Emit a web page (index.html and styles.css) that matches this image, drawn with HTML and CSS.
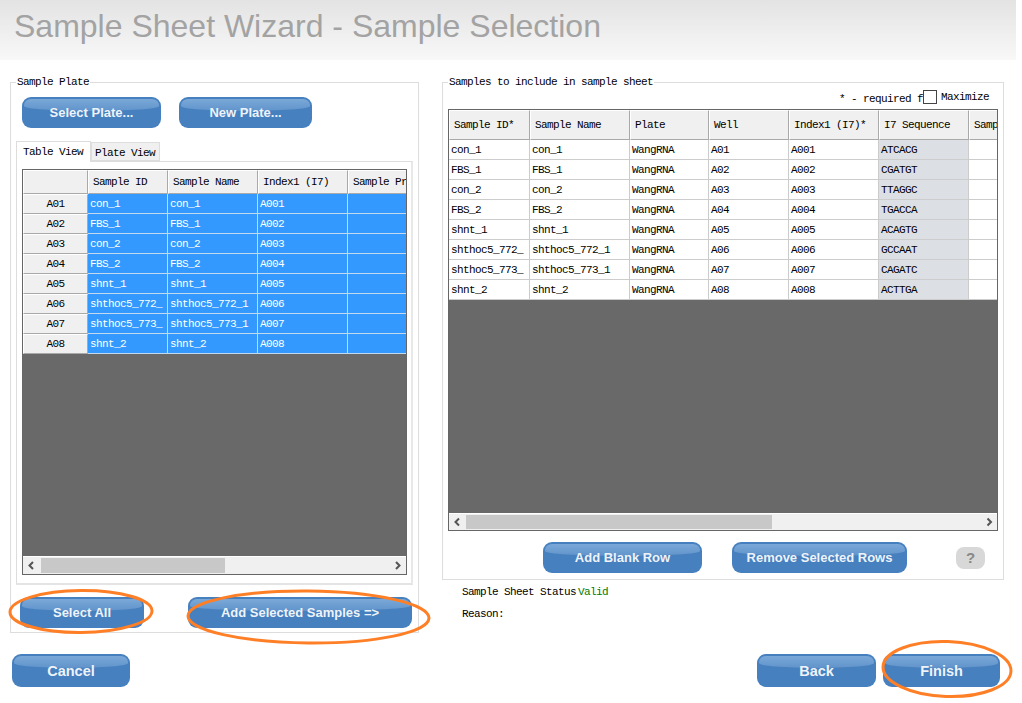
FILE: index.html
```html
<!DOCTYPE html>
<html lang="en">
<head>
<meta charset="utf-8">
<title>Sample Sheet Wizard - Sample Selection</title>
<link rel="stylesheet" href="styles.css">
</head>
<body>
<div class="page">
  <div class="title-bar"><h1>Sample Sheet Wizard - Sample Selection</h1></div>

  <div class="main">
    <fieldset class="panel plate-panel">
      <legend>Sample Plate</legend>
      <div class="plate-actions">
        <div class="btn btn-select-plate">Select Plate...</div>
        <div class="btn btn-new-plate">New Plate...</div>
      </div>
      <div class="tabs">
        <div class="tab tab-active">Table View</div>
        <div class="tab">Plate View</div>
      </div>
      <div class="tab-pane">
        <div class="grid-frame plate-frame">
          <table class="grid grid-selected">
            <colgroup><col class="c64"><col class="c80"><col class="c90"><col class="c90"><col class="c60"></colgroup>
            <tr><th></th><th>Sample ID</th><th>Sample Name</th><th>Index1 (I7)</th><th>Sample Pr</th></tr>
            <tr><th class="row-head">A01</th><td>con_1</td><td>con_1</td><td>A001</td><td></td></tr>
            <tr><th class="row-head">A02</th><td>FBS_1</td><td>FBS_1</td><td>A002</td><td></td></tr>
            <tr><th class="row-head">A03</th><td>con_2</td><td>con_2</td><td>A003</td><td></td></tr>
            <tr><th class="row-head">A04</th><td>FBS_2</td><td>FBS_2</td><td>A004</td><td></td></tr>
            <tr><th class="row-head">A05</th><td>shnt_1</td><td>shnt_1</td><td>A005</td><td></td></tr>
            <tr><th class="row-head">A06</th><td>shthoc5_772_</td><td>shthoc5_772_1</td><td>A006</td><td></td></tr>
            <tr><th class="row-head">A07</th><td>shthoc5_773_</td><td>shthoc5_773_1</td><td>A007</td><td></td></tr>
            <tr><th class="row-head">A08</th><td>shnt_2</td><td>shnt_2</td><td>A008</td><td></td></tr>
          </table>
          <div class="grid-empty"></div>
          <div class="scrollbar">
            <svg class="arrow" width="18" height="17" viewBox="0 0 18 17"><path d="M10 5 L6.5 8.5 L10 12" fill="none" stroke="#555" stroke-width="2"/></svg>
            <div class="track"><div class="thumb thumb-plate"></div></div>
            <svg class="arrow" width="18" height="17" viewBox="0 0 18 17"><path d="M8 5 L11.5 8.5 L8 12" fill="none" stroke="#555" stroke-width="2"/></svg>
          </div>
        </div>
      </div>
      <div class="plate-footer">
        <div class="btn btn-select-all">Select All</div>
        <div class="btn btn-add-selected">Add Selected Samples =&gt;</div>
      </div>
    </fieldset>

    <div class="right-col">
      <fieldset class="panel sheet-panel">
        <legend>Samples to include in sample sheet</legend>
        <div class="sheet-options">
          <span class="required-note">* - required f</span>
          <input type="checkbox" class="maximize-box">
          <span class="maximize-label">Maximize</span>
        </div>
        <div class="grid-frame sheet-frame">
          <table class="grid grid-sheet">
            <colgroup><col class="c81"><col class="c100"><col class="c79"><col class="c80"><col class="c90"><col class="c90"><col class="c29"></colgroup>
            <tr><th>Sample ID*</th><th>Sample Name</th><th>Plate</th><th>Well</th><th>Index1 (I7)*</th><th>I7 Sequence</th><th>Samp</th></tr>
            <tr><td>con_1</td><td>con_1</td><td>WangRNA</td><td>A01</td><td>A001</td><td class="seq">ATCACG</td><td></td></tr>
            <tr><td>FBS_1</td><td>FBS_1</td><td>WangRNA</td><td>A02</td><td>A002</td><td class="seq">CGATGT</td><td></td></tr>
            <tr><td>con_2</td><td>con_2</td><td>WangRNA</td><td>A03</td><td>A003</td><td class="seq">TTAGGC</td><td></td></tr>
            <tr><td>FBS_2</td><td>FBS_2</td><td>WangRNA</td><td>A04</td><td>A004</td><td class="seq">TGACCA</td><td></td></tr>
            <tr><td>shnt_1</td><td>shnt_1</td><td>WangRNA</td><td>A05</td><td>A005</td><td class="seq">ACAGTG</td><td></td></tr>
            <tr><td>shthoc5_772_</td><td>shthoc5_772_1</td><td>WangRNA</td><td>A06</td><td>A006</td><td class="seq">GCCAAT</td><td></td></tr>
            <tr><td>shthoc5_773_</td><td>shthoc5_773_1</td><td>WangRNA</td><td>A07</td><td>A007</td><td class="seq">CAGATC</td><td></td></tr>
            <tr><td>shnt_2</td><td>shnt_2</td><td>WangRNA</td><td>A08</td><td>A008</td><td class="seq">ACTTGA</td><td></td></tr>
          </table>
          <div class="grid-empty"></div>
          <div class="scrollbar">
            <svg class="arrow" width="17" height="16" viewBox="0 0 17 16"><path d="M10 4.5 L6.5 8 L10 11.5" fill="none" stroke="#555" stroke-width="2"/></svg>
            <div class="track"><div class="thumb thumb-sheet"></div></div>
            <svg class="arrow" width="17" height="16" viewBox="0 0 17 16"><path d="M7.5 4.5 L11 8 L7.5 11.5" fill="none" stroke="#555" stroke-width="2"/></svg>
          </div>
        </div>
        <div class="sheet-actions">
          <div class="btn btn-add-blank">Add Blank Row</div>
          <div class="btn btn-remove">Remove Selected Rows</div>
          <div class="help-btn">?</div>
        </div>
      </fieldset>
      <div class="status">
        <div class="status-row">Sample Sheet Status<span class="status-valid">Valid</span></div>
        <div class="status-row">Reason:</div>
      </div>
    </div>
  </div>

  <div class="footer">
    <div class="btn btn-cancel">Cancel</div>
    <div class="footer-right">
      <div class="btn btn-back">Back</div>
      <div class="btn btn-finish">Finish</div>
    </div>
  </div>

  <!-- orange marks drawn over the screenshot -->
  <svg class="marks" width="1022" height="703" viewBox="0 0 1022 703">
    <ellipse cx="81" cy="611.5" rx="71" ry="21" transform="rotate(-0.5 81 611)"/>
    <ellipse cx="308.5" cy="617" rx="120.5" ry="26" transform="rotate(0.5 308 617)"/>
    <ellipse cx="947" cy="669" rx="64" ry="27.5" transform="rotate(2 947 669)"/>
  </svg>
</div>
</body>
</html>
```

FILE: styles.css
```css
body {
  margin: 0;
  background: #fff;
  font-family: "Liberation Mono", monospace;
  font-size: 11px;
  letter-spacing: -0.6px;
  color: #000;
}
.page {
  position: relative;
  width: 1016px;
  height: 703px;
  overflow: hidden;
}

/* title */
.title-bar {
  height: 60px;
  background: linear-gradient(#e3e3e3, #f8f8f8);
  padding-left: 14px;
}
.title-bar h1 {
  margin: 0;
  font: normal 32px/53px "Liberation Sans", Arial, sans-serif;
  letter-spacing: 0;
  color: #a3a3a3;
}

/* layout */
.main {
  display: flex;
  align-items: flex-start;
  padding: 16px 0 0 10px;
}
.panel {
  margin: 0;
  padding: 0;
  border: 1px solid #ddd;
  box-sizing: border-box;
  min-width: 0;
}
.panel legend {
  margin-left: 5px;
  padding: 0 1px;
  line-height: 12px;
}
.plate-panel {
  width: 409px;
  height: 557px;
}
.right-col {
  width: 562px;
  margin-left: 23px;
}
.sheet-panel {
  height: 504px;
}

/* buttons */
.btn {
  position: relative;
  z-index: 0;
  box-sizing: border-box;
  height: 31px;
  border-radius: 9px;
  background: #4680bf;
  color: #eef3f9;
  font: bold 13px/32px "Liberation Sans", Arial, sans-serif;
  letter-spacing: 0;
  text-align: center;
  overflow: hidden;
}
.btn::before {
  content: "";
  position: absolute;
  z-index: -1;
  left: 2px;
  right: 2px;
  top: 2px;
  height: 12px;
  border-radius: 7px 7px 50% 50% / 6px 6px 5px 5px;
  background: linear-gradient(#7aa8d8, #6194cb);
}

.plate-actions {
  display: flex;
  margin: 9px 0 0 11px;
}
.btn-select-plate { width: 139px; }
.btn-new-plate { width: 133px; margin-left: 18px; }

/* tabs */
.tabs {
  display: flex;
  align-items: flex-end;
  margin: 13px 0 0 5px;
  height: 21px;
}
.tab {
  box-sizing: border-box;
  width: 69px;
  height: 19px;
  line-height: 20px;
  padding-left: 3px;
  border: 1px solid #ddd;
  background: #f0f0f0;
  margin-bottom: 1px;
}
.tab-active {
  width: 75px;
  height: 21px;
  line-height: 20px;
  padding-left: 6px;
  background: #fff;
  border-bottom: 0;
  margin-bottom: 0;
  position: relative;
  z-index: 1;
}
.tab-pane {
  box-sizing: border-box;
  width: 397px;
  height: 424px;
  margin: -1px 0 0 5px;
  padding: 7px 0 0 5px;
  border: 1px solid #ddd;
  border-right: 2px solid #e8e8e8;
  border-bottom: 2px solid #e4e4e4;
}

/* tables */
.grid-frame {
  box-sizing: border-box;
  display: flex;
  flex-direction: column;
  border: 1px solid #666;
  overflow: hidden;
}
.plate-frame {
  width: 385px;
  height: 406px;
}
.sheet-frame {
  width: 550px;
  height: 422px;
  margin-left: 5px;
}
.grid {
  flex: none;
  table-layout: fixed;
  border-collapse: separate;
  border-spacing: 0;
  width: 100%;
  background: #fff;
}
.c29 { width: 29px; }
.c60 { width: 59px; }
.c64 { width: 65px; }
.c79 { width: 79px; }
.c80 { width: 80px; }
.c81 { width: 81px; }
.c90 { width: 90px; }
.c100 { width: 100px; }
.grid th, .grid td {
  box-sizing: border-box;
  white-space: nowrap;
  overflow: hidden;
  font-weight: normal;
  text-align: left;
  padding: 0 0 0 2px;
  height: 20px;
}
.grid td {
  border-right: 1px solid #ccc;
  border-bottom: 1px solid #ccc;
}
.grid th {
  background: #f0f0f0;
  padding-left: 4px;
  border-top: 1px solid #fff;
  border-left: 1px solid #fff;
  border-right: 1px solid #a9a9a9;
  border-bottom: 1px solid #a9a9a9;
}
.grid tr:first-child th { height: 24px; }
.grid-sheet tr:first-child th { height: 30px; }
.grid .row-head {
  text-align: center;
  padding: 0;
}
.grid-selected td {
  background: #39f;
  color: #fff;
  border-color: #c4d9ee;
}
.grid .seq { background: #dcdfe4; }
.grid-empty {
  flex: 1;
  background: #696969;
}

/* scrollbar */
.scrollbar {
  display: flex;
  flex: none;
  background: #f0f0f0;
  border-top: 1px solid #fff;
}
.arrow { flex: none; display: block; }
.track {
  flex: 1;
  display: flex;
  align-items: stretch;
  padding: 1px 0;
}
.thumb {
  background: #c8c8c8;
}
.thumb-plate { width: 184px; }
.thumb-sheet { width: 306px; }

.plate-footer {
  display: flex;
  margin: 12px 0 0 9px;
}
.btn-select-all { width: 124px; }
.btn-add-selected { width: 224px; margin-left: 44px; }

/* right side */
.sheet-options {
  display: flex;
  align-items: center;
  justify-content: flex-end;
  height: 14px;
  margin: 2px 13px 5px 0;
}
.required-note {
  white-space: nowrap;
  margin-top: 3px;
}
.maximize-box {
  appearance: none;
  box-sizing: border-box;
  width: 14px;
  height: 14px;
  margin: 0 4px 0 0;
  border: 1px solid #444;
  background: #fff;
}
.maximize-label { width: 49px; white-space: nowrap; }

.sheet-actions {
  display: flex;
  align-items: center;
  margin: 11px 0 0 100px;
}
.btn-add-blank { width: 159px; }
.btn-remove { width: 175px; margin-left: 30px; }
.help-btn {
  width: 29px;
  height: 22px;
  margin-left: 49px;
  border-radius: 8px;
  background: #d8d8d8;
  color: #888;
  font: bold 15px/22px "Liberation Sans", Arial, sans-serif;
  letter-spacing: 0;
  text-align: center;
}

.status {
  padding: 6px 0 0 20px;
}
.status-row {
  line-height: 13px;
  height: 22px;
}
.status-valid {
  margin-left: 2px;
  color: #007a00;
}

/* bottom buttons */
.footer {
  display: flex;
  justify-content: space-between;
  margin-top: 21px;
  padding: 0 16px 0 12px;
}
.footer .btn {
  height: 33px;
  line-height: 35px;
  font-size: 14.5px;
}
.footer-right { display: flex; }
.btn-cancel { width: 118px; }
.btn-back { width: 119px; }
.btn-finish { width: 117px; margin-left: 7px; }

.marks {
  position: absolute;
  left: 0;
  top: 0;
  pointer-events: none;
}
.marks ellipse {
  fill: none;
  stroke: #ff7f27;
  stroke-width: 3;
}
```
